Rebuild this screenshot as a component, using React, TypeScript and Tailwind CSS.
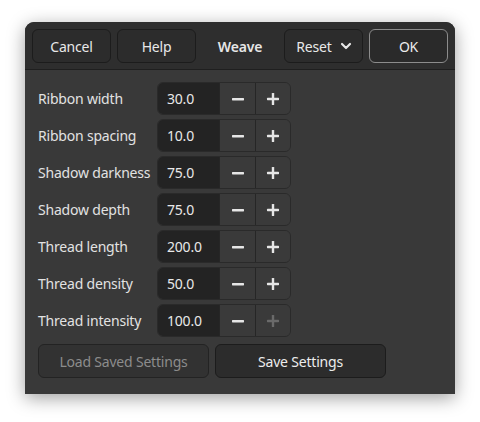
import { ChevronDown } from "lucide-react";

const rows: { label: string; value: string; plusDisabled?: boolean }[] = [
  { label: "Ribbon width", value: "30.0" },
  { label: "Ribbon spacing", value: "10.0" },
  { label: "Shadow darkness", value: "75.0" },
  { label: "Shadow depth", value: "75.0" },
  { label: "Thread length", value: "200.0" },
  { label: "Thread density", value: "50.0" },
  { label: "Thread intensity", value: "100.0", plusDisabled: true },
];

function Minus() {
  return (
    <svg width="14" height="14" viewBox="0 0 14 14">
      <rect x="1" y="6" width="12" height="2.4" rx="0.6" fill="currentColor" />
    </svg>
  );
}

function Plus() {
  return (
    <svg width="14" height="14" viewBox="0 0 14 14">
      <rect x="1" y="5.8" width="12" height="2.4" rx="0.6" fill="currentColor" />
      <rect x="5.8" y="1" width="2.4" height="12" rx="0.6" fill="currentColor" />
    </svg>
  );
}

function HeaderButton({ children, className = "" }: { children: React.ReactNode; className?: string }) {
  return (
    <button
      type="button"
      className={`h-[34px] w-[79px] rounded-[6px] border border-[#1c1c1c] bg-[#2c2c2c] text-[#e8e8e8] flex items-center justify-center ${className}`}
    >
      {children}
    </button>
  );
}

export default function App() {
  return (
    <div
      className="w-[480px] h-[422px] bg-white pl-[25px] pt-[22px]"
      style={{ fontFamily: '"Noto Sans", "Open Sans", sans-serif' }}
    >
      <div className="w-[430px] h-[372px] rounded-t-[9px] bg-[#393939] shadow-[0_4px_18px_rgba(0,0,0,0.38)] flex flex-col text-[14px] tracking-[-0.2px]">
        <div className="h-[48px] rounded-t-[9px] bg-[#2e2e2e] border-b border-[#1f1f1f] flex items-start pt-[7px] px-[7px]">
          <HeaderButton>Cancel</HeaderButton>
          <HeaderButton className="ml-[6px]">Help</HeaderButton>
          <div className="flex-1 h-[34px] flex items-center justify-center font-semibold text-[#e6e6e6]">Weave</div>
          <HeaderButton className="gap-[6px] pl-[3px]">
            Reset
            <ChevronDown size={16} strokeWidth={3.2} className="-mt-[1px]" />
          </HeaderButton>
          <button
            type="button"
            className="ml-[6px] h-[34px] w-[79px] rounded-[6px] border border-[#8c8c8c] bg-[#2a2a2a] text-[#ececec]"
          >
            OK
          </button>
        </div>
        <div className="flex flex-col pt-[12px] pl-[13px]">
          <div className="flex flex-col gap-[4px]">
            {rows.map((r) => (
              <div key={r.label} className="flex items-center h-[33px]">
                <div className="w-[119px] text-[#e2e2e2]">{r.label}</div>
                <div className="flex h-[33px] rounded-[6px] border border-[#2a2a2a] overflow-hidden">
                  <div className="w-[61px] bg-[#232323] text-[#e8e8e8] flex items-center pl-[9px]">{r.value}</div>
                  <div className="w-[36px] bg-[#3a3a3a] border-l border-[#262626] flex items-center justify-center text-[#e6e6e6]">
                    <Minus />
                  </div>
                  <div
                    className={`w-[35px] bg-[#3a3a3a] border-l border-[#262626] flex items-center justify-center ${
                      r.plusDisabled ? "text-[#6a6a6a]" : "text-[#e6e6e6]"
                    }`}
                  >
                    <Plus />
                  </div>
                </div>
              </div>
            ))}
          </div>
          <div className="flex gap-[6px] mt-[7px]">
            <button
              type="button"
              className="h-[34px] w-[171px] rounded-[6px] border border-[#232323] bg-[#323232] text-[#8c8c8c]"
            >
              Load Saved Settings
            </button>
            <button
              type="button"
              className="h-[34px] w-[171px] rounded-[6px] border border-[#1c1c1c] bg-[#2c2c2c] text-[#ececec]"
            >
              Save Settings
            </button>
          </div>
        </div>
      </div>
    </div>
  );
}
